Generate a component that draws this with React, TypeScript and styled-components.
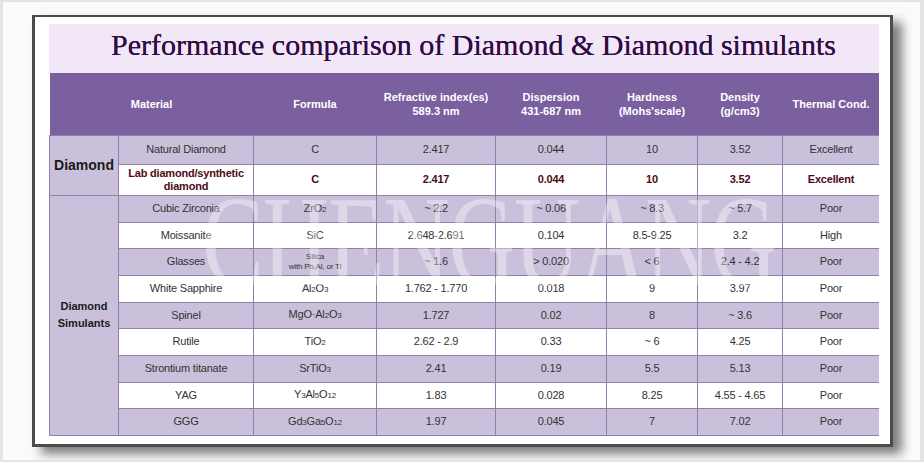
import React from "react";
import styled, { createGlobalStyle } from "styled-components";

const GlobalStyle = createGlobalStyle`
  html, body { margin: 0; padding: 0; background: #e4e4e4; }
  body { font-family: "Liberation Sans", Arial, sans-serif; }
`;

const Page = styled.div`
  margin: 2px 4px 0 3px;
  width: 917px;
  height: 458px;
  box-sizing: border-box;
  background: #fbfbfb;
  padding: 13px 0 0 29px;
`;

const Frame = styled.div`
  width: 861px;
  box-sizing: border-box;
  background: #ffffff;
  border: 3px solid #4b4b4b;
  border-top-width: 2px;
  padding: 7px 11px 8px 14px;
  box-shadow: 9px 7px 10px rgba(0, 0, 0, 0.5);
`;

const TitleBar = styled.h1`
  margin: 0;
  height: 49px;
  box-sizing: border-box;
  padding: 0 0 8px 19px;
  background: #f2e7f7;
  color: #2f0c46;
  font: 400 30px/41px "Liberation Serif", "Times New Roman", serif;
  text-align: center;
  white-space: nowrap;
  text-shadow: 0 0 0.4px #2f0c46;
`;

const TableWrap = styled.div`
  position: relative;
  width: 830px;
  overflow: hidden;
`;

const Table = styled.table`
  width: 830px;
  border-collapse: collapse;
  table-layout: fixed;
  font-family: "Liberation Sans", Arial, sans-serif;
`;

const HeadRow = styled.tr`
  height: 62px;
  background: #7b60a0;
`;

const HeadCell = styled.th`
  color: #ffffff;
  font-size: 11px;
  font-weight: 700;
  line-height: 14px;
  text-align: center;
  padding: 0 2px;
  border: none;
`;

const Row = styled.tr<{ $white?: boolean; $h: number }>`
  height: ${(p) => p.$h}px;
  background: ${(p) => (p.$white ? "#ffffff" : "#cbc0dc")};
`;

const Cell = styled.td<{ $strong?: boolean }>`
  border: 1px solid #9080ac;
  padding: 0 2px;
  text-align: center;
  vertical-align: middle;
  font-size: 11px;
  line-height: 13px;
  letter-spacing: -0.2px;
  color: ${(p) => (p.$strong ? "#4e0c16" : "#333333")};
  font-weight: ${(p) => (p.$strong ? 700 : 400)};
`;

const GroupCell = styled.td<{ $size: number }>`
  border: 1px solid #9080ac;
  background: #cbc0dc;
  text-align: center;
  vertical-align: middle;
  color: #1a1a1a;
  font-weight: 700;
  font-size: ${(p) => p.$size}px;
  line-height: ${(p) => (p.$size > 12 ? 16 : 17)}px;
`;

const Sub = styled.span`
  font-size: 8px;
`;

const SmallNote = styled.div`
  font-size: 8px;
  line-height: 10px;
  letter-spacing: -0.2px;
`;

const Watermark = styled.div`
  position: absolute;
  left: 150px;
  top: 104px;
  width: 580px;
  text-align: center;
  font: 400 92px/92px "Liberation Serif", "Times New Roman", serif;
  color: rgba(255, 255, 255, 0.36);
  letter-spacing: -1px;
  transform: scaleY(1.4);
  transform-origin: top center;
  pointer-events: none;
  white-space: nowrap;
`;

type Item = {
  name: React.ReactNode;
  formula: React.ReactNode;
  ri: string;
  disp: string;
  hard: string;
  dens: string;
  therm: string;
  h: number;
};

const diamonds: Item[] = [
  { name: "Natural Diamond", formula: "C", ri: "2.417", disp: "0.044", hard: "10", dens: "3.52", therm: "Excellent", h: 29 },
  {
    name: (
      <>
        Lab diamond/synthetic
        <br />
        diamond
      </>
    ),
    formula: "C",
    ri: "2.417",
    disp: "0.044",
    hard: "10",
    dens: "3.52",
    therm: "Excellent",
    h: 31,
  },
];

const simulants: Item[] = [
  { name: "Cubic Zirconia", formula: <>ZrO<Sub>2</Sub></>, ri: "~ 2.2", disp: "~ 0.06", hard: "~ 8.3", dens: "~ 5.7", therm: "Poor", h: 27 },
  { name: "Moissanite", formula: "SiC", ri: "2.648-2.691", disp: "0.104", hard: "8.5-9.25", dens: "3.2", therm: "High", h: 26 },
  {
    name: "Glasses",
    formula: (
      <>
        <SmallNote>Silica</SmallNote>
        <SmallNote>with Pb,Al, or Tl</SmallNote>
      </>
    ),
    ri: "~ 1.6",
    disp: "> 0.020",
    hard: "< 6",
    dens: "2.4 - 4.2",
    therm: "Poor",
    h: 27,
  },
  { name: "White Sapphire", formula: <>Al<Sub>2</Sub>O<Sub>3</Sub></>, ri: "1.762 - 1.770", disp: "0.018", hard: "9", dens: "3.97", therm: "Poor", h: 27 },
  { name: "Spinel", formula: <>MgO·Al<Sub>2</Sub>O<Sub>3</Sub></>, ri: "1.727", disp: "0.02", hard: "8", dens: "~ 3.6", therm: "Poor", h: 26 },
  { name: "Rutile", formula: <>TiO<Sub>2</Sub></>, ri: "2.62 - 2.9", disp: "0.33", hard: "~ 6", dens: "4.25", therm: "Poor", h: 27 },
  { name: "Strontium titanate", formula: <>SrTiO<Sub>3</Sub></>, ri: "2.41", disp: "0.19", hard: "5.5", dens: "5.13", therm: "Poor", h: 27 },
  { name: "YAG", formula: <>Y<Sub>3</Sub>Al<Sub>5</Sub>O<Sub>12</Sub></>, ri: "1.83", disp: "0.028", hard: "8.25", dens: "4.55 - 4.65", therm: "Poor", h: 26 },
  { name: "GGG", formula: <>Gd<Sub>3</Sub>Ga<Sub>5</Sub>O<Sub>12</Sub></>, ri: "1.97", disp: "0.045", hard: "7", dens: "7.02", therm: "Poor", h: 27 },
];

const widths = [69, 135, 123, 119, 111, 91, 85, 97];

const DataCells: React.FC<{ item: Item; strong?: boolean }> = ({ item, strong }) => (
  <>
    <Cell $strong={strong}>{item.name}</Cell>
    <Cell $strong={strong}>{item.formula}</Cell>
    <Cell $strong={strong}>{item.ri}</Cell>
    <Cell $strong={strong}>{item.disp}</Cell>
    <Cell $strong={strong}>{item.hard}</Cell>
    <Cell $strong={strong}>{item.dens}</Cell>
    <Cell $strong={strong}>{item.therm}</Cell>
  </>
);

export default function App() {
  return (
    <>
      <GlobalStyle />
      <Page>
        <Frame>
          <TitleBar>Performance comparison of Diamond &amp; Diamond simulants</TitleBar>
          <TableWrap>
            <Table>
              <colgroup>
                {widths.map((w, i) => (
                  <col key={i} style={{ width: w }} />
                ))}
              </colgroup>
              <thead>
                <HeadRow>
                  <HeadCell colSpan={2}>Material</HeadCell>
                  <HeadCell>Formula</HeadCell>
                  <HeadCell>
                    Refractive index(es)
                    <br />
                    589.3 nm
                  </HeadCell>
                  <HeadCell>
                    Dispersion
                    <br />
                    431-687 nm
                  </HeadCell>
                  <HeadCell>
                    Hardness
                    <br />
                    (Mohs'scale)
                  </HeadCell>
                  <HeadCell>
                    Density
                    <br />
                    (g/cm3)
                  </HeadCell>
                  <HeadCell>Thermal Cond.</HeadCell>
                </HeadRow>
              </thead>
              <tbody>
                {diamonds.map((d, i) => (
                  <Row key={`d${i}`} $white={i === 1} $h={d.h}>
                    {i === 0 && (
                      <GroupCell rowSpan={2} $size={14}>
                        Diamond
                      </GroupCell>
                    )}
                    <DataCells item={d} strong={i === 1} />
                  </Row>
                ))}
                {simulants.map((s, i) => (
                  <Row key={`s${i}`} $white={i % 2 === 1} $h={s.h}>
                    {i === 0 && (
                      <GroupCell rowSpan={simulants.length} $size={11}>
                        Diamond
                        <br />
                        Simulants
                      </GroupCell>
                    )}
                    <DataCells item={s} />
                  </Row>
                ))}
              </tbody>
            </Table>
            <Watermark>CHENGUANG</Watermark>
          </TableWrap>
        </Frame>
      </Page>
    </>
  );
}
